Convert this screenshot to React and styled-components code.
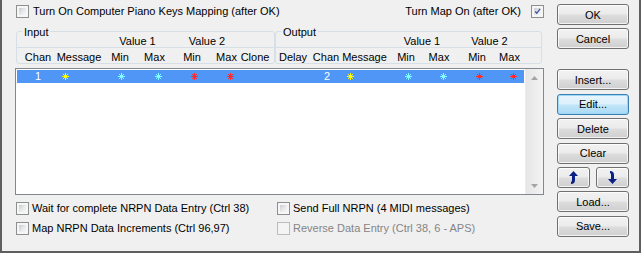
import React from 'react';
import styled, { createGlobalStyle } from 'styled-components';

const Global = createGlobalStyle`
  html, body { margin: 0; padding: 0; background: #f0f0f0; }
  body { font-family: "Liberation Sans", Arial, sans-serif; font-size: 11px; color: #000; }
  #root { width: 641px; height: 253px; }
`;

const Frame = styled.div`
  width: 641px;
  height: 253px;
  box-sizing: border-box;
  background: #f0f0f0;
  border-left: 2px solid #5f5f5f;
  border-right: 2px solid #5f5f5f;
  border-bottom: 2px solid #5f5f5f;
  display: flex;
`;

const Main = styled.div`
  width: 529px;
  padding-left: 13px;
  display: flex;
  flex-direction: column;
`;

const TopRow = styled.div`
  margin-top: 5px;
  height: 13px;
  padding-left: 1px;
  display: flex;
  align-items: center;
  justify-content: space-between;
`;

const CheckRow = styled.label`
  display: flex;
  align-items: center;
  gap: ${p => p.$gap || 4}px;
  height: 13px;
  line-height: 13px;
  white-space: nowrap;
  color: ${p => (p.$disabled ? '#858585' : '#000')};
`;

const Box = styled.span`
  width: 13px;
  height: 13px;
  box-sizing: border-box;
  flex: none;
  border: 1px solid ${p => (p.$disabled ? '#bcbcbc' : '#8e8f8f')};
  padding: 2px;
  background: ${p =>
    p.$disabled
      ? '#f4f4f4'
      : 'linear-gradient(135deg, #c9ccd1 0%, #e9eaec 55%, #f7f7f7 100%) content-box, #f6f6f6'};
  display: flex;
  align-items: center;
  justify-content: center;
`;

const Header = styled.div`
  margin-top: 13px;
  padding-left: 1px;
  display: flex;
`;

const Group = styled.div`
  position: relative;
  width: ${p => p.$w}px;
  box-sizing: border-box;
  border: 1px solid #d5dfe5;
  border-radius: 3px;
  display: flex;
  flex-direction: column;
`;

const Legend = styled.span`
  position: absolute;
  top: -6px;
  left: 5px;
  padding: 0 2px;
  line-height: 13px;
  background: #f0f0f0;
`;

const LabelRow = styled.div`
  height: 15px;
  box-sizing: border-box;
  padding-top: 3px;
  line-height: 13px;
  display: grid;
  grid-template-columns: ${p => p.$cols};
  border-bottom: ${p => (p.$divider ? '1px solid #d5dfe5' : 'none')};
  height: ${p => (p.$divider ? 16 : 15)}px;
`;

const Lab = styled.span`
  display: flex;
  justify-content: center;
  white-space: nowrap;
`;

const List = styled.div`
  margin-top: 4px;
  height: 127px;
  box-sizing: border-box;
  border: 1px solid #828790;
  background: #fff;
  display: flex;
`;

const ListBody = styled.div`
  flex: 1;
  padding: 1px;
`;

const Row = styled.div`
  height: 13px;
  line-height: 13px;
  background: #5096f6;
  color: #fff;
  display: grid;
  grid-template-columns: 42px 40px 42px 27px 48px 21px 36px 3px 34px 32px 45px 38px 28px 48px 17px 1fr;
  align-items: center;
`;

const Cell = styled.span`
  display: flex;
  align-items: center;
  justify-content: ${p => (p.$start ? 'flex-start' : 'center')};
  padding-left: ${p => p.$pad || 0}px;
  height: 13px;
`;

const Scrollbar = styled.div`
  width: 17px;
  flex: none;
  background: linear-gradient(to right, #e6e6e6, #f3f3f3);
  border-left: 1px solid #ececec;
  display: flex;
  flex-direction: column;
  justify-content: space-between;
`;

const ScrollBtn = styled.div`
  height: 17px;
  display: flex;
  align-items: center;
  justify-content: center;
`;

const Options = styled.div`
  margin-top: 7px;
  padding-left: 1px;
  display: grid;
  grid-template-columns: 261px 1fr;
  row-gap: 7px;
`;

const Side = styled.div`
  width: 72px;
  margin-left: 13px;
  padding-top: 4px;
  display: flex;
  flex-direction: column;
`;

const BtnStack = styled.div`
  display: flex;
  flex-direction: column;
  gap: ${p => p.$gap}px;
  margin-top: ${p => p.$mt || 0}px;
`;

const Btn = styled.button`
  height: 21px;
  width: 100%;
  box-sizing: border-box;
  padding: 0;
  border: 1px solid ${p => (p.$default ? '#3c7fb1' : '#707070')};
  border-radius: 3px;
  background: ${p =>
    p.$default
      ? 'linear-gradient(#e8f5fd 0%, #dcf0fc 48%, #c2e5f8 52%, #a9daf5 100%)'
      : 'linear-gradient(#f2f2f2 0%, #ebebeb 48%, #dddddd 52%, #cfcfcf 100%)'};
  box-shadow: ${p =>
    p.$default
      ? 'inset 0 0 0 1px #9fd7f6, 0 0 0 0 transparent'
      : 'inset 0 0 0 1px rgba(255,255,255,0.75)'};
  font-family: "Liberation Sans", Arial, sans-serif;
  font-size: 11px;
  color: #000;
  display: flex;
  align-items: center;
  justify-content: center;
`;

const ArrowPair = styled.div`
  display: grid;
  grid-template-columns: 1fr 1fr;
  column-gap: 6px;
`;

const Star = ({ color }) => (
  <svg width="7" height="7" viewBox="0 0 7 7" shapeRendering="crispEdges">
    <g fill={color}>
      <rect x="0" y="3" width="7" height="1" />
      <rect x="3" y="0" width="1" height="7" />
      <rect x="1" y="1" width="1" height="1" />
      <rect x="2" y="2" width="1" height="1" />
      <rect x="4" y="4" width="1" height="1" />
      <rect x="5" y="5" width="1" height="1" />
      <rect x="5" y="1" width="1" height="1" />
      <rect x="4" y="2" width="1" height="1" />
      <rect x="2" y="4" width="1" height="1" />
      <rect x="1" y="5" width="1" height="1" />
    </g>
  </svg>
);

const Check = () => (
  <svg width="9" height="9" viewBox="0 0 9 9">
    <path d="M1.5 4.5 L3.6 6.8 L7.8 1.2" fill="none" stroke="#3b55a0" strokeWidth="1.7" />
  </svg>
);

const Tri = ({ up }) => (
  <svg width="7" height="4" viewBox="0 0 7 4">
    <path d={up ? 'M0 4 L3.5 0 L7 4 Z' : 'M0 0 L7 0 L3.5 4 Z'} fill="#a4a4a4" />
  </svg>
);

const UpArrow = () => (
  <svg width="9" height="13" viewBox="0 0 9 13">
    <path d="M4.5 0 L9 5 H6 V9 Q6 13 2 13 V11 Q3 11 3 9 V5 H0 Z" fill="#0a1f86" />
  </svg>
);

const DownArrow = () => (
  <svg width="9" height="13" viewBox="0 0 9 13">
    <path d="M4.5 13 L9 8 H6 V4 Q6 0 2 0 V2 Q3 2 3 4 V8 H0 Z" fill="#0a1f86" />
  </svg>
);

const CheckBox = ({ label, checked, disabled, gap, boxRight }) => (
  <CheckRow $gap={gap} $disabled={disabled}>
    {!boxRight && <Box $disabled={disabled}>{checked && <Check />}</Box>}
    <span>{label}</span>
    {boxRight && <Box $disabled={disabled}>{checked && <Check />}</Box>}
  </CheckRow>
);

const YEL = '#ffff00';
const CYA = '#7fffff';
const RED = '#ff2a2a';

export default function App() {
  return (
    <>
      <Global />
      <Frame>
        <Main>
          <TopRow>
            <CheckBox label="Turn On Computer Piano Keys Mapping (after OK)" gap={4} />
            <CheckBox label="Turn Map On (after OK)" gap={10} checked boxRight />
          </TopRow>

          <Header>
            <Group $w={259}>
              <Legend>Input</Legend>
              <LabelRow $cols="99px 43px 96px 1fr" $divider>
                <span />
                <Lab>Value 1</Lab>
                <Lab>Value 2</Lab>
              </LabelRow>
              <LabelRow $cols="42px 40px 42px 27px 48px 21px 36px">
                <Lab>Chan</Lab>
                <Lab>Message</Lab>
                <Lab>Min</Lab>
                <Lab>Max</Lab>
                <Lab>Min</Lab>
                <Lab>Max</Lab>
                <Lab>Clone</Lab>
              </LabelRow>
            </Group>
            <Group $w={267}>
              <Legend>Output</Legend>
              <LabelRow $cols="124px 44px 91px 1fr" $divider>
                <span />
                <Lab>Value 1</Lab>
                <Lab>Value 2</Lab>
              </LabelRow>
              <LabelRow $cols="34px 32px 45px 38px 28px 48px 17px 1fr">
                <Lab>Delay</Lab>
                <Lab>Chan</Lab>
                <Lab>Message</Lab>
                <Lab>Min</Lab>
                <Lab>Max</Lab>
                <Lab>Min</Lab>
                <Lab>Max</Lab>
              </LabelRow>
            </Group>
          </Header>

          <List>
            <ListBody>
              <Row>
                <Cell>1</Cell>
                <Cell $start $pad={3}><Star color={YEL} /></Cell>
                <Cell $pad={2}><Star color={CYA} /></Cell>
                <Cell $pad={7}><Star color={CYA} /></Cell>
                <Cell $pad={4}><Star color={RED} /></Cell>
                <Cell $pad={7}><Star color={RED} /></Cell>
                <Cell />
                <Cell />
                <Cell />
                <Cell $pad={2}>2</Cell>
                <Cell $start $pad={5}><Star color={YEL} /></Cell>
                <Cell $pad={4}><Star color={CYA} /></Cell>
                <Cell $pad={8}><Star color={CYA} /></Cell>
                <Cell $pad={4}><Star color={RED} /></Cell>
                <Cell $pad={7}><Star color={RED} /></Cell>
                <Cell />
              </Row>
            </ListBody>
            <Scrollbar>
              <ScrollBtn><Tri up /></ScrollBtn>
              <ScrollBtn><Tri /></ScrollBtn>
            </Scrollbar>
          </List>

          <Options>
            <CheckBox label="Wait for complete NRPN Data Entry (Ctrl 38)" gap={3} />
            <CheckBox label="Send Full NRPN (4 MIDI messages)" gap={3} />
            <CheckBox label="Map NRPN Data Increments (Ctrl 96,97)" gap={3} />
            <CheckBox label="Reverse Data Entry (Ctrl 38, 6 - APS)" gap={3} disabled />
          </Options>
        </Main>

        <Side>
          <BtnStack $gap={3.4}>
            <Btn>OK</Btn>
            <Btn>Cancel</Btn>
          </BtnStack>
          <BtnStack $gap={3.4} $mt={20}>
            <Btn>Insert...</Btn>
            <Btn $default>Edit...</Btn>
            <Btn>Delete</Btn>
            <Btn>Clear</Btn>
            <ArrowPair>
              <Btn aria-label="Move up"><UpArrow /></Btn>
              <Btn aria-label="Move down"><DownArrow /></Btn>
            </ArrowPair>
            <Btn>Load...</Btn>
            <Btn>Save...</Btn>
          </BtnStack>
        </Side>
      </Frame>
    </>
  );
}
